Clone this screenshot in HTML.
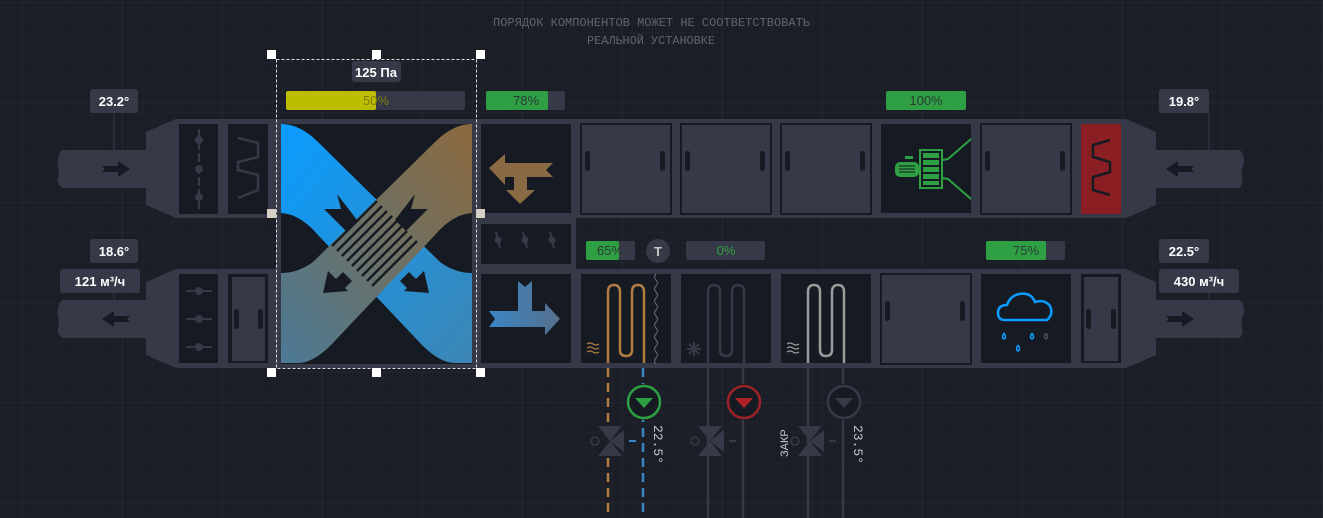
<!DOCTYPE html>
<html><head><meta charset="utf-8"><style>
html,body{margin:0;padding:0;background:#1b1e26;}
svg{display:block}
text{font-family:"Liberation Sans",sans-serif}
.m{font-family:"Liberation Mono",monospace}
</style></head><body>
<svg width="1323" height="518" viewBox="0 0 1323 518" xmlns="http://www.w3.org/2000/svg">
<defs>
<pattern id="g1" width="10" height="10" patternUnits="userSpaceOnUse" x="3" y="3"><path d="M10 0V10M0 10H10" stroke="#22262e" stroke-width="1" fill="none"/></pattern>
<pattern id="g2" width="100" height="100" patternUnits="userSpaceOnUse" x="23" y="3"><path d="M100 0V100M0 100H100" stroke="#2c3039" stroke-width="1" fill="none"/></pattern>
<linearGradient id="blue" x1="0" y1="0" x2="1" y2="1"><stop offset="0" stop-color="#0a9cff"/><stop offset="1" stop-color="#3c86b4"/></linearGradient>
<linearGradient id="brown" x1="1" y1="0" x2="0" y2="1"><stop offset="0" stop-color="#8c6a3e"/><stop offset="0.5" stop-color="#6c7066"/><stop offset="1" stop-color="#4c7a96"/></linearGradient>
<linearGradient id="arr2" x1="0" y1="0" x2="1" y2="0"><stop offset="0" stop-color="#3a86c4"/><stop offset="1" stop-color="#56708c"/></linearGradient>
<clipPath id="rc"><rect x="281" y="124" width="191" height="240"/></clipPath>
<g id="door"><rect x="0" y="0" width="90" height="90" fill="#363a48" stroke="#161a22" stroke-width="2"/><rect x="4" y="27" width="5" height="20" rx="2.5" fill="#161a22"/><rect x="79" y="27" width="5" height="20" rx="2.5" fill="#161a22"/></g>
</defs>
<rect width="1323" height="518" fill="#1b1e26"/>
<rect width="1323" height="518" fill="url(#g1)"/>
<rect width="1323" height="518" fill="url(#g2)"/>

<text class="m" x="493" y="26" fill="#60646f" font-size="12" textLength="317" lengthAdjust="spacingAndGlyphs">ПОРЯДОК КОМПОНЕНТОВ МОЖЕТ НЕ СООТВЕТСТВОВАТЬ</text>
<text class="m" x="587" y="44" fill="#60646f" font-size="12" textLength="128" lengthAdjust="spacingAndGlyphs">РЕАЛЬНОЙ УСТАНОВКЕ</text>

<path d="M114 113V150M114 293V300M1209 113V150M1209 293V300" stroke="#363a48" stroke-width="1"/>

<g fill="#363a48">
<path d="M146 132L176 119V218L146 205Z"/><path d="M62 150H146V188H62Q56 182 58 178Q60 172 58 167Q56 158 62 150Z"/>
<path d="M146 282L176 269V368L146 355Z"/><path d="M62 300H146V338H62Q56 332 58 328Q60 322 58 317Q56 308 62 300Z"/>
<path d="M1156 132L1126 119V218L1156 205Z"/><path d="M1156 150H1240Q1246 158 1243 166Q1240 172 1242 178Q1243 183 1240 188H1156Z"/>
<path d="M1156 282L1126 269V368L1156 355Z"/><path d="M1156 300H1240Q1246 308 1243 316Q1240 322 1242 328Q1243 333 1240 338H1156Z"/>
</g>
<g fill="#161a22">
<path d="M102 166H118V161L130 169L118 177V172H102L105 169Z"/>
<path d="M130 316H114V311L102 319L114 327V322H130L127 319Z"/>
<path d="M1194 166H1178V161L1166 169L1178 177V172H1194L1191 169Z"/>
<path d="M1166 316H1182V311L1194 319L1182 327V322H1166L1169 319Z"/>
</g>

<rect x="176" y="119" width="950" height="99" fill="#363a48"/>
<rect x="176" y="269" width="950" height="99" fill="#363a48"/>
<rect x="476" y="218" width="100" height="51" fill="#363a48"/>
<rect x="276" y="218" width="200" height="51" fill="#363a48"/>

<rect x="179" y="124" width="39" height="90" fill="#161a22"/>
<path d="M199 129V209" stroke="#363a48" stroke-width="2" stroke-dasharray="9 3"/>
<circle cx="199" cy="140" r="4" fill="#363a48"/><circle cx="199" cy="169" r="4" fill="#363a48"/><circle cx="199" cy="197" r="4" fill="#363a48"/>
<rect x="228" y="124" width="40" height="90" fill="#161a22"/>
<path d="M238 138L258 143V157L238 162V170L258 175V190L238 198" stroke="#363a48" stroke-width="2.5" fill="none"/>

<rect x="179" y="274" width="39" height="89" fill="#161a22"/>
<g stroke="#363a48" stroke-width="2"><path d="M186 291H212M186 319H212M186 347H212"/></g>
<circle cx="199" cy="291" r="4" fill="#363a48"/><circle cx="199" cy="319" r="4" fill="#363a48"/><circle cx="199" cy="347" r="4" fill="#363a48"/>
<rect x="228" y="274" width="40" height="89" fill="#161a22"/>
<rect x="231" y="276" width="35" height="86" fill="#363a48" stroke="#161a22" stroke-width="2"/>
<rect x="234" y="309" width="5" height="20" rx="2.5" fill="#161a22"/><rect x="258" y="309" width="5" height="20" rx="2.5" fill="#161a22"/>

<!-- recuperator -->
<rect x="281" y="124" width="191" height="240" fill="#161a22"/>
<g clip-path="url(#rc)">
<path d="M281 124Q300 124 318 142L440 262Q455 273 472 273V363H455Q440 363 422 345L318 235Q300 214 281 213Z" fill="url(#blue)"/>
<path d="M472 124Q453 124 435 142L313 262Q298 273 281 273V363H298Q313 363 331 345L435 235Q453 214 472 213Z" fill="url(#brown)"/>
<g stroke="#161a22" stroke-width="2.5">
<path d="M332 246L377 201M337 251L382 206M342 256L387 211M347 261L392 216M352 266L397 221M357 271L402 226M362 276L407 231M367 281L412 236M372 286L417 241"/>
</g>
<path d="M337 194L341 209L324 209L346 231L357 220Z" fill="#161a22"/>
<path d="M415 194L411 209L428 209L406 231L395 220Z" fill="#161a22"/>
<path d="M323 293L328 271L336 279L343 272L352 281L345 288L348 291Z" fill="#161a22"/>
<path d="M429 293L424 271L416 279L409 272L400 281L407 288L404 291Z" fill="#161a22"/>
</g>

<rect x="481" y="124" width="90" height="89" fill="#161a22"/>
<path d="M489 168L505 154V163H553L546 170L553 177H527V190H535L520 204L506 190H514V177H505V185Z" fill="#8a6a44"/>
<rect x="481" y="224" width="90" height="40" fill="#161a22"/>
<g stroke="#363a48" stroke-width="2"><path d="M496 232L500 248M523 232L527 248M550 232L554 248"/></g>
<circle cx="498" cy="240" r="3.5" fill="#363a48"/><circle cx="525" cy="240" r="3.5" fill="#363a48"/><circle cx="552" cy="240" r="3.5" fill="#363a48"/>
<rect x="481" y="274" width="90" height="89" fill="#161a22"/>
<path d="M518 281L525 287L532 281V311H545V303L560 319L545 335V327H489L495 319L489 311H518Z" fill="url(#arr2)"/>

<use href="#door" x="581" y="124"/>
<use href="#door" x="681" y="124"/>
<use href="#door" x="781" y="124"/>
<rect x="881" y="124" width="90" height="89" fill="#161a22"/>
<g fill="none" stroke="#2ea043" stroke-width="2">
<rect x="920" y="150" width="22" height="38"/>
<path d="M942 160L948 159L971 139M942 178L948 179L971 199"/>
</g>
<g fill="#2ea043">
<rect x="895" y="162" width="24" height="15" rx="5"/><rect x="905" y="156" width="8" height="3"/>
<rect x="923" y="153" width="16" height="5"/><rect x="923" y="160" width="16" height="5"/><rect x="923" y="167" width="16" height="5"/><rect x="923" y="174" width="16" height="5"/><rect x="923" y="181" width="16" height="4"/>
</g>
<g stroke="#161a22" stroke-width="1"><path d="M899 166H915M899 169H915M899 172H915"/></g>
<use href="#door" x="981" y="124"/>
<rect x="1081" y="124" width="40" height="90" fill="#8b1e22"/>
<path d="M1110 140L1093 145V157L1110 162V172L1093 177V190L1110 195" stroke="#161a22" stroke-width="2.5" fill="none"/>

<rect x="581" y="274" width="90" height="89" fill="#161a22"/>
<path d="M608 363V292Q608 285 614 285Q620 285 620 292V350Q620 356 626 356Q632 356 632 350V292Q632 285 638 285Q644 285 644 292V363" stroke="#b07c42" stroke-width="2.5" fill="none"/>
<path d="M656 274q-3 3 0 6t0 6t0 6t0 6t0 6t0 6t0 6t0 6t0 6t0 6t0 6t0 6t0 6t0 6t0 6" stroke="#6a6e7a" stroke-width="1" fill="none"/>
<g stroke="#b07c42" stroke-width="1.3" fill="none"><path d="M587 344q3-2 6 0t6 0M587 348q3-2 6 0t6 0M587 352q3-2 6 0t6 0"/></g>
<rect x="681" y="274" width="90" height="89" fill="#161a22"/>
<path d="M708 363V292Q708 285 714 285Q720 285 720 292V350Q720 356 726 356Q732 356 732 350V292Q732 285 738 285Q744 285 744 292V363" stroke="#363a48" stroke-width="2.5" fill="none"/>
<g stroke="#363a48" stroke-width="2"><path d="M694 342V356M687 349H701M689 344L699 354M699 344L689 354"/></g>
<rect x="781" y="274" width="90" height="89" fill="#161a22"/>
<path d="M808 363V292Q808 285 814 285Q820 285 820 292V350Q820 356 826 356Q832 356 832 350V292Q832 285 838 285Q844 285 844 292V363" stroke="#9a9a9a" stroke-width="2.5" fill="none"/>
<g stroke="#9a9a9a" stroke-width="1.3" fill="none"><path d="M787 344q3-2 6 0t6 0M787 348q3-2 6 0t6 0M787 352q3-2 6 0t6 0"/></g>
<use href="#door" x="881" y="274"/>
<rect x="981" y="274" width="90" height="89" fill="#161a22"/>
<path d="M1005 320Q998 320 998 313Q998 305 1007 305Q1010 296 1019 294Q1031 292 1035 302Q1045 299 1050 306Q1054 314 1047 320Z" stroke="#0a9cff" stroke-width="2.5" fill="none"/>
<g fill="none" stroke-width="1.5"><path d="M1004 333q-3 5 0 6q3-1 0-6" stroke="#0a9cff"/><path d="M1032 333q-3 5 0 6q3-1 0-6" stroke="#0a9cff"/><path d="M1018 345q-3 5 0 6q3-1 0-6" stroke="#0a9cff"/><path d="M1046 333q-3 5 0 6q3-1 0-6" stroke="#4a4e5a"/></g>
<rect x="1081" y="274" width="40" height="89" fill="#161a22"/>
<rect x="1083" y="276" width="36" height="86" fill="#363a48" stroke="#161a22" stroke-width="2"/>
<rect x="1086" y="309" width="5" height="20" rx="2.5" fill="#161a22"/><rect x="1111" y="309" width="5" height="20" rx="2.5" fill="#161a22"/>

<path d="M608 368V518" stroke="#b07c42" stroke-width="2.5" stroke-dasharray="9 6"/>
<path d="M643 368V518" stroke="#3a86c4" stroke-width="2.5" stroke-dasharray="9 6"/>
<path d="M708 368V518M743 368V518M808 368V518M843 368V518" stroke="#363a48" stroke-width="2.5"/>
<rect x="637" y="384" width="12" height="36" fill="#1b1e26"/><rect x="737" y="384" width="12" height="36" fill="#1b1e26"/><rect x="837" y="384" width="12" height="36" fill="#1b1e26"/>
<circle cx="644" cy="402" r="16" fill="#161a22" stroke="#2ea043" stroke-width="2.5"/><path d="M635 398H653L644 408Z" fill="#2ea043"/>
<circle cx="744" cy="402" r="16" fill="#161a22" stroke="#9a2226" stroke-width="2.5"/><path d="M735 398H753L744 408Z" fill="#b02226"/>
<circle cx="844" cy="402" r="16" fill="#161a22" stroke="#363a48" stroke-width="2.5"/><path d="M835 398H853L844 408Z" fill="#363a48"/>
<g fill="#363a48">
<rect x="599" y="424" width="20" height="34" fill="#1b1e26"/>
<path d="M598 426H622L610 441L622 456H598L610 441Z"/><path d="M624 430V452L610 441Z"/>
<path d="M698 426H722L710 441L722 456H698L710 441Z"/><path d="M724 430V452L710 441Z"/>
<path d="M798 426H822L810 441L822 456H798L810 441Z"/><path d="M824 430V452L810 441Z"/>
</g>
<path d="M629 441H636" stroke="#3a86c4" stroke-width="2"/>
<path d="M729 441H736M829 441H836" stroke="#363a48" stroke-width="2"/>
<g fill="none" stroke="#363a48" stroke-width="1.5"><circle cx="595" cy="441" r="4"/><circle cx="695" cy="441" r="4"/><circle cx="795" cy="441" r="4"/></g>
<text class="m" transform="translate(654,425) rotate(90)" fill="#c8c8c8" font-size="13">22.5°</text>
<text class="m" transform="translate(854,425) rotate(90)" fill="#c8c8c8" font-size="13">23.5°</text>
<text transform="translate(788,457) rotate(-90)" fill="#c8c8c8" font-size="11">ЗАКР</text>

<g class="m" font-size="13" text-anchor="middle">
<rect x="286" y="91" width="179" height="19" rx="2" fill="#363a48"/><rect x="286" y="91" width="90" height="19" rx="2" fill="#bdbd00"/><text x="376" y="105" fill="#7d7d10">50%</text>
<rect x="486" y="91" width="79" height="19" rx="2" fill="#363a48"/><rect x="486" y="91" width="62" height="19" rx="2" fill="#2ea043"/><text x="526" y="105" fill="#2a3a36">78%</text>
<rect x="886" y="91" width="80" height="19" rx="2" fill="#2ea043"/><text x="926" y="105" fill="#2a3a36">100%</text>
<rect x="586" y="241" width="49" height="19" rx="2" fill="#363a48"/><rect x="586" y="241" width="33" height="19" rx="2" fill="#2ea043"/><text x="610" y="255" fill="#2a3a36">65%</text>
<rect x="686" y="241" width="79" height="19" rx="2" fill="#363a48"/><text x="726" y="255" fill="#2ea043">0%</text>
<rect x="986" y="241" width="79" height="19" rx="2" fill="#363a48"/><rect x="986" y="241" width="60" height="19" rx="2" fill="#2ea043"/><text x="1026" y="255" fill="#2a3a36">75%</text>
</g>
<circle cx="658" cy="251" r="12" fill="#363a48"/><text x="658" y="256" fill="#c8c8c8" font-size="13" font-weight="bold" text-anchor="middle">T</text>

<g font-size="13" font-weight="bold" fill="#fff" text-anchor="middle">
<rect x="90" y="89" width="48" height="24" rx="3" fill="#363a48"/><text x="114" y="106">23.2°</text>
<rect x="90" y="239" width="48" height="24" rx="3" fill="#363a48"/><text x="114" y="256">18.6°</text>
<rect x="60" y="269" width="80" height="24" rx="3" fill="#363a48"/><text x="100" y="286">121 м³/ч</text>
<rect x="1159" y="89" width="50" height="24" rx="3" fill="#363a48"/><text x="1184" y="106">19.8°</text>
<rect x="1159" y="239" width="50" height="24" rx="3" fill="#363a48"/><text x="1184" y="256">22.5°</text>
<rect x="1159" y="269" width="80" height="24" rx="3" fill="#363a48"/><text x="1199" y="286">430 м³/ч</text>
<rect x="352" y="61" width="49" height="21" rx="3" fill="#363a48"/><text x="376" y="77">125 Па</text>
</g>

<rect x="276.5" y="59.5" width="200" height="309" fill="none" stroke="#ddd" stroke-width="1" stroke-dasharray="3 2"/>
<g fill="#fff">
<rect x="267" y="50" width="9" height="9"/><rect x="372" y="50" width="9" height="9"/><rect x="476" y="50" width="9" height="9"/>
<rect x="267" y="368" width="9" height="9"/><rect x="372" y="368" width="9" height="9"/><rect x="476" y="368" width="9" height="9"/>
</g>
<rect x="267" y="209" width="9" height="9" fill="#d8d0c4"/><rect x="476" y="209" width="9" height="9" fill="#d8d0c4"/>
</svg>
</body></html>
